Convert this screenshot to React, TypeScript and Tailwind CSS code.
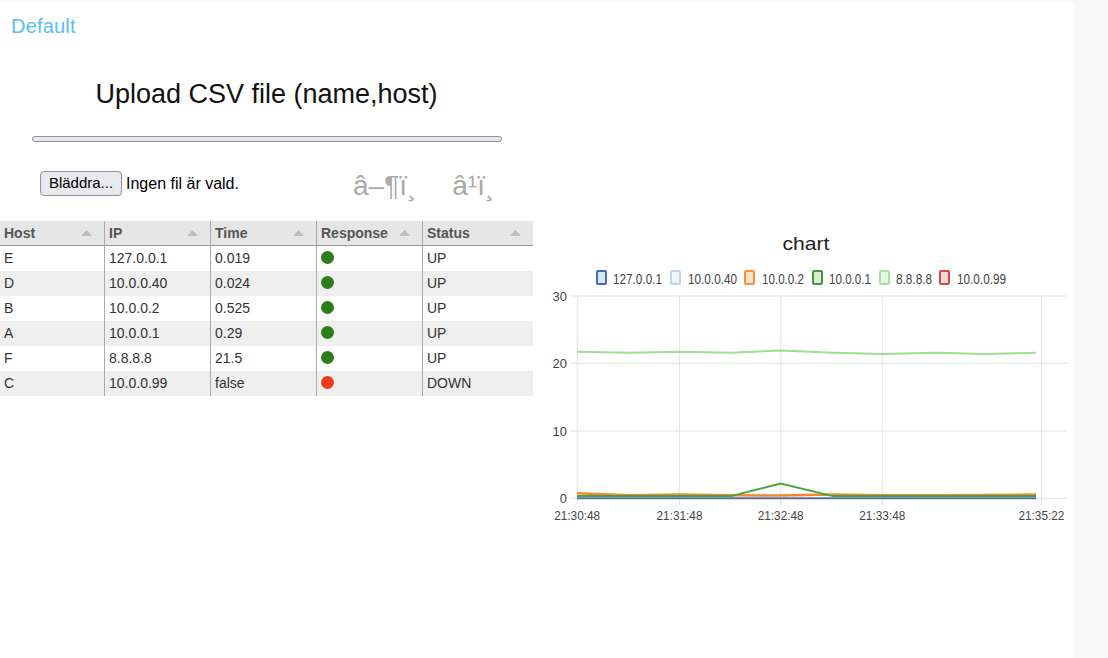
import React from "react";

const rows = [
  { host: "E", ip: "127.0.0.1", time: "0.019", up: true },
  { host: "D", ip: "10.0.0.40", time: "0.024", up: true },
  { host: "B", ip: "10.0.0.2", time: "0.525", up: true },
  { host: "A", ip: "10.0.0.1", time: "0.29", up: true },
  { host: "F", ip: "8.8.8.8", time: "21.5", up: true },
  { host: "C", ip: "10.0.0.99", time: "false", up: false },
];

const headers = ["Host", "IP", "Time", "Response", "Status"];

function SortArrow() {
  return (
    <svg width="11" height="6" viewBox="0 0 11 6" className="shrink-0">
      <polygon points="0,6 5.5,0 11,6" fill="#bdbdbd" />
    </svg>
  );
}

const XS = [44, 96.5, 146.5, 198, 247.7, 299.7, 349.3, 403, 451, 503];
const vy = (v: number) => 277.3 - v * 6.74;
const pts = (vals: number[]) => vals.map((v, i) => `${XS[i]},${vy(v).toFixed(1)}`).join(" ");

const series = {
  g88: [21.75, 21.6, 21.75, 21.6, 21.95, 21.6, 21.4, 21.6, 21.4, 21.6],
  g1: [0.33, 0.33, 0.33, 0.33, 2.2, 0.33, 0.33, 0.33, 0.33, 0.33],
  o2: [0.74, 0.45, 0.55, 0.45, 0.4, 0.55, 0.45, 0.45, 0.5, 0.55],
  b1: [0.02, 0.02, 0.02, 0.02, 0.02, 0.02, 0.02, 0.02, 0.02, 0.02],
  b40: [0.05, 0.05, 0.05, 0.05, 0.05, 0.05, 0.05, 0.05, 0.05, 0.05],
  r99: [0, 0, 0, 0, 0, 0, 0, 0, 0, 0],
};

const legend = [
  { label: "127.0.0.1", bx: 63, tx: 80, tl: 49, stroke: "#3e6fb6", fill: "#dbe4f2" },
  { label: "10.0.0.40", bx: 137, tx: 155, tl: 49, stroke: "#c3d4ee", fill: "#eef3fb" },
  { label: "10.0.0.2", bx: 211, tx: 229, tl: 42, stroke: "#f5923e", fill: "#fde4cf" },
  { label: "10.0.0.1", bx: 279, tx: 296, tl: 42, stroke: "#3f9a3a", fill: "#d8ecd4" },
  { label: "8.8.8.8", bx: 346, tx: 363, tl: 36, stroke: "#a8e29a", fill: "#e9f8e5" },
  { label: "10.0.0.99", bx: 406, tx: 424, tl: 49, stroke: "#d44a4a", fill: "#f6d8d8" },
];

const yTicks = [
  { l: "30", y: 75 },
  { l: "20", y: 142.3 },
  { l: "10", y: 210 },
  { l: "0", y: 277.3 },
];
const xTicks = [
  { l: "21:30:48", x: 44.2 },
  { l: "21:31:48", x: 146.5 },
  { l: "21:32:48", x: 247.7 },
  { l: "21:33:48", x: 349.3 },
  { l: "21:35:22", x: 508.4 },
];

function Chart() {
  return (
    <svg width="541" height="320" viewBox="0 0 541 320" style={{ fontFamily: '"Liberation Sans", Arial, sans-serif' }}>
      <text x="273" y="28.5" textAnchor="middle" fontSize="19" fill="#222" textLength="47" lengthAdjust="spacingAndGlyphs">
        chart
      </text>
      {legend.map((it) => (
        <g key={it.label}>
          <rect x={it.bx + 1} y="50" width="9" height="13" fill={it.fill} stroke={it.stroke} strokeWidth="2" rx="1" />
          <text x={it.tx} y="62.5" fontSize="15.5" fill="#444" textLength={it.tl} lengthAdjust="spacingAndGlyphs">
            {it.label}
          </text>
        </g>
      ))}
      {yTicks.map((t) => (
        <g key={t.l}>
          <line x1="37" x2="534" y1={t.y} y2={t.y} stroke="#e4e4e4" strokeWidth="1" />
          <text x="34" y={t.y + 4.5} textAnchor="end" fontSize="13" fill="#444">
            {t.l}
          </text>
        </g>
      ))}
      {xTicks.map((t) => (
        <g key={t.l}>
          <line x1={t.x} x2={t.x} y1="75" y2="284" stroke="#e4e4e4" strokeWidth="1" />
          <text x={t.x} y="299" textAnchor="middle" fontSize="13.5" fill="#444" textLength="46" lengthAdjust="spacingAndGlyphs">
            {t.l}
          </text>
        </g>
      ))}
      <polyline points={pts(series.r99)} fill="none" stroke="#d44a4a" strokeWidth="2" />
      <polyline points={pts(series.b40)} fill="none" stroke="#aec7e8" strokeWidth="2" />
      <polyline points={pts(series.g88)} fill="none" stroke="#9ddf90" strokeWidth="2" />
      <polyline points={pts(series.o2)} fill="none" stroke="#f7872a" strokeWidth="2.5" />
      <polyline points={pts(series.g1)} fill="none" stroke="#47a33f" strokeWidth="2" />
      <polyline points={pts(series.b1)} fill="none" stroke="#3e6fb6" strokeWidth="1.5" />
    </svg>
  );
}

export default function App() {
  return (
    <div
      className="min-h-screen w-full bg-[#f9f9f9] pt-[3px]"
      style={{ fontFamily: '"Liberation Sans", Arial, sans-serif' }}
    >
      <div className="w-[1074px] h-[655px] bg-white">
        <div className="pl-[11px] pt-[13px] text-[20px] leading-[20px] text-[#5bbef7] tracking-[0.2px]">Default</div>
        <div className="w-[533px]">
          <div className="mt-[42px] text-center text-[27px] leading-[32px] text-[#111]">Upload CSV file (name,host)</div>
          <div className="mt-[26px] ml-[32px] w-[470px] h-[6px] rounded-full border border-[#8f8f9d] bg-[#e9e9ed]" />
          <div className="mt-[29px] flex items-center h-[25px]">
            <div className="ml-[40px] w-[313px] flex items-center">
              <div className="h-[25px] w-[82px] rounded-[4px] border border-[#8f8f9d] bg-[#e9e9ed] flex items-center justify-center text-[15px] text-black">
                Bläddra...
              </div>
              <span className="ml-[4px] text-[16px] text-black">Ingen fil är vald.</span>
            </div>
            <span className="text-[28px] leading-[28px] text-[#a9a9a9] mt-[4px]">â–¶ï¸</span>
            <span className="ml-[36px] text-[28px] leading-[28px] text-[#a9a9a9] mt-[4px]">â¹ï¸</span>
          </div>
        </div>
        <div className="mt-[25px] flex items-start">
          <div className="w-[533px] text-[14px]">
            <div className="grid grid-cols-[105px_106px_106px_106px_110px] h-[25px] bg-[#e6e6e6] border-b border-[#999]">
              {headers.map((h, i) => (
                <div
                  key={h}
                  className={`flex items-center justify-between pl-[4px] pr-[12px] font-bold text-[#555] ${i < 4 ? "border-r border-[#aaa]" : ""}`}
                >
                  <span>{h}</span>
                  <SortArrow />
                </div>
              ))}
            </div>
            {rows.map((r, idx) => (
              <div
                key={r.host}
                className={`grid grid-cols-[105px_106px_106px_106px_110px] h-[25px] text-[#333] ${idx % 2 === 1 ? "bg-[#efefef]" : "bg-white"}`}
              >
                <div className="flex items-center pl-[4px] border-r border-[#aaa]">{r.host}</div>
                <div className="flex items-center pl-[4px] border-r border-[#aaa]">{r.ip}</div>
                <div className="flex items-center pl-[4px] border-r border-[#aaa]">{r.time}</div>
                <div className="flex items-center pl-[4px] border-r border-[#aaa]">
                  <span
                    className={`block w-[13px] h-[13px] rounded-full -mt-[2px] ${r.up ? "bg-[#2d7d1a]" : "bg-[#ec3a1d]"}`}
                  />
                </div>
                <div className="flex items-center pl-[4px]">{r.up ? "UP" : "DOWN"}</div>
              </div>
            ))}
          </div>
          <div className="flex-1">
            <Chart />
          </div>
        </div>
      </div>
    </div>
  );
}
